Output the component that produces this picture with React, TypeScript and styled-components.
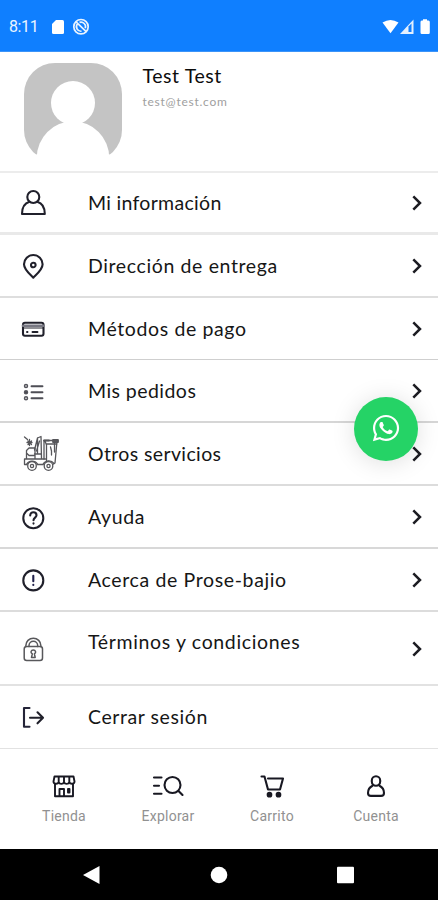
import React from "react";
import styled, { createGlobalStyle } from "styled-components";
import { FaWhatsapp } from "react-icons/fa";

const GlobalStyle = createGlobalStyle`
  *, *::before, *::after { box-sizing: border-box; }
  body { margin: 0; background: #fff; }
`;

const Screen = styled.div`
  position: relative;
  width: 438px;
  height: 900px;
  display: flex;
  flex-direction: column;
  overflow: hidden;
  background: #fff;
  color: #161616;
  font-family: Lato, sans-serif;
`;

const StatusBar = styled.header`
  flex: none;
  height: 52px;
  padding: 2px 7px 0 9px;
  display: flex;
  align-items: center;
  background: #0f7fff;
  border-bottom: 1px solid #3c94f8;
  color: #eaf4ff;
`;

const Clock = styled.span`
  width: 42px;
  padding-top: 1px;
  font: 400 16px/20px Roboto, sans-serif;
  letter-spacing: -0.4px;
`;

const StatusIcons = styled.svg<{ $end?: boolean }>`
  display: block;
  margin-left: ${(p) => (p.$end ? "auto" : "0")};
`;

const Profile = styled.section`
  flex: none;
  height: 121px;
  padding: 11px 24px 0;
  display: flex;
  gap: 20.5px;
  border-bottom: 2px solid #ececec;
`;

const ProfileText = styled.div`
  display: flex;
  flex-direction: column;
`;

const Name = styled.h1`
  margin: 1px 0 0;
  font-size: 19.5px;
  line-height: 24px;
  font-weight: 400;
  letter-spacing: 0.58px;
  color: #0c0c0c;
`;

const Email = styled.span`
  margin-top: 6px;
  font-size: 12px;
  line-height: 16px;
  letter-spacing: 0.75px;
  color: #a0a0a0;
`;

const Menu = styled.ul`
  flex: none;
  margin: 0;
  padding: 0;
  list-style: none;
`;

const MenuRow = styled.li<{ $height: number; $line: number; $tone: string }>`
  height: ${(p) => p.$height}px;
  padding: 0 15px;
  display: flex;
  align-items: center;
  border-bottom: ${(p) => p.$line}px solid ${(p) => p.$tone};
`;

const RowIcon = styled.svg`
  flex: none;
  display: block;
  width: 73px;
  height: 44px;
  fill: none;
  stroke: #20202b;
  stroke-width: 2.1;
  stroke-linecap: round;
  stroke-linejoin: round;
`;

const Label = styled.span<{ $spacing: number; $lift?: number }>`
  flex: 1;
  font-size: 19.5px;
  line-height: 24px;
  letter-spacing: ${(p) => p.$spacing}px;
  padding-bottom: ${(p) => p.$lift ?? 0}px;
  white-space: nowrap;
`;

const Chevron = styled.svg`
  flex: none;
  display: block;
  margin-top: 1px;
  fill: none;
  stroke: #1c1c22;
  stroke-width: 2.5;
`;

const TabBar = styled.nav`
  flex: none;
  height: 100px;
  padding: 22px 10px 0 12px;
  display: grid;
  grid-template-columns: repeat(4, 1fr);
`;

const Tab = styled.div`
  display: flex;
  flex-direction: column;
  align-items: center;
  gap: 6px;
`;

const TabIcon = styled.svg`
  display: block;
  fill: none;
  stroke: #181822;
  stroke-width: 2.1;
  stroke-linecap: round;
  stroke-linejoin: round;
`;

const TabLabel = styled.span`
  font: 400 14px/18px Roboto, sans-serif;
  letter-spacing: 0.25px;
  color: #919191;
`;

const SystemBar = styled.footer`
  flex: 1;
  display: flex;
  align-items: center;
  justify-content: center;
  background: #000;
`;

const ChatButton = styled.button`
  position: absolute;
  right: 20px;
  top: 397px;
  width: 64px;
  height: 64px;
  padding: 0 0 2px;
  border: 0;
  border-radius: 50%;
  display: flex;
  align-items: center;
  justify-content: center;
  background: #25d366;
  color: #fff;
  box-shadow: 0 2px 24px rgba(0, 0, 0, 0.13);
`;

const icons = {
  person: (
    <>
      <circle cx="18.3" cy="-6" r="6" />
      <path d="M14.500-1.300C10 0 7 4.200 7 11H29.800C29.800 4.200 27 0 22.200-1.300" />
    </>
  ),
  pin: (
    <>
      <path d="M18.300 11.700C14 7.500 9 3.500 9-1.700A9.300 9.300 0 0 1 27.600-1.700C27.600 3.500 22.500 7.500 18.300 11.700Z" />
      <circle cx="18.3" cy="-1" r="2.300" />
    </>
  ),
  card: (
    <>
      <rect x="8" y="-6.300" width="20.500" height="13" rx="2" />
      <path d="M8-3.200H28.500" stroke="#777782" strokeWidth="2.600" />
      <path d="M8-1H28.500" strokeWidth="1.200" />
      <path d="M12 3h.5M17.500 3h5" strokeWidth="1.900" />
    </>
  ),
  list: (
    <>
      <path d="M16.500 -4.800H27.500M16.500 1.200H27.500M16.500 7.200H27.500" stroke="#4e4e55" strokeWidth="1.900" />
      <g stroke="#55555c" strokeWidth="1.500">
        <circle cx="11" cy="-5" r="1.500" />
        <circle cx="11" cy="1.200" r="1.500" fill="#44444b" />
        <circle cx="11" cy="7.300" r="1.500" />
      </g>
    </>
  ),
  cart: (
    <g stroke="#56565a" strokeWidth="1.300">
      <path d="M9.500 5V10.500H12M22 10.500H28M9.500 5H30.500M11.500 4.500V-3.500L14-6H20V4.500M12-.5L14 1.500H19" />
      <path d="M9.500-17l3 2.500M14.500-14.500v6M12-11.500h5M13-13l3.500 3.500M16.500-13l-3.500 3.500" />
      <path d="M19.500-4L22.500-16L26-17.500L26.500 4.500M22.500-16V0M24.500-13L21.500-3M19.500 0H26" />
      <path d="M29 5V-13.500H42M31.500-10H42M30-13L31.500-9V9M42-13L40 9L36 11.500M35.500-7L36.500-3V1M39.500-11V-2" />
      <path d="M29-13.500H34M38-12H43V-14H38Z" strokeWidth="1.800" />
      <circle cx="17" cy="12" r="4.300" fill="#fff" />
      <circle cx="17" cy="12" r="1.600" />
      <circle cx="33.500" cy="12" r="4.300" fill="#fff" />
      <circle cx="33.500" cy="12" r="1.600" />
      <path d="M11.500 10.500A6.500 6.500 0 0 1 22.500 10M28 10.500A6.500 6.500 0 0 1 39 9.500" />
    </g>
  ),
  help: (
    <>
      <circle cx="18.300" cy="1.200" r="10" />
      <path d="M15.200-1.500C15.200-6 21.500-5.600 21.500-1.800C21.500.5 18.500.7 18.500 3.200M18.500 6.200v.4" />
    </>
  ),
  info: (
    <>
      <circle cx="18.300" cy=".4" r="10" />
      <path d="M18.300-4.300V1.200M18.300 4.700v.3" stroke="#20204a" />
    </>
  ),
  lock: (
    <g stroke="#58585b" strokeWidth="1.500">
      <rect x="9.200" y="-1.500" width="18.300" height="14" rx="2.500" />
      <path d="M10.800-1.500V-2.300A7.500 7.500 0 0 1 25.900-2.300V-1.500M14-1.500V-2.300A4.300 4.300 0 0 1 22.700-2.300V-1.500" />
      <path d="M16.500 9.500L17.300 5.800C15 4.300 16 2.100 18.300 2.100S21.600 4.300 19.400 5.800L20.200 9.500Z" />
    </g>
  ),
  logout: (
    <>
      <path d="M14.500-9H9V9.800H14.500" stroke="#242438" />
      <path d="M15 .8H27.800M22.500-4.700L28 .8L22.500 6.300" />
    </>
  ),
};

type Item = {
  icon: keyof typeof icons;
  label: string;
  height: number;
  line: number;
  tone: string;
  spacing: number;
  lift?: number;
  arrow?: boolean;
};

const items: Item[] = [
  { icon: "person", label: "Mi información", height: 62, line: 3, tone: "#e9e9e9", spacing: 0.3 },
  { icon: "pin", label: "Dirección de entrega", height: 63, line: 2, tone: "#dedede", spacing: 0.62 },
  { icon: "card", label: "Métodos de pago", height: 62, line: 1, tone: "#cfcfcf", spacing: 0.62 },
  { icon: "list", label: "Mis pedidos", height: 63, line: 2, tone: "#d6d6d6", spacing: 0.45 },
  { icon: "cart", label: "Otros servicios", height: 63, line: 2, tone: "#dcdcdc", spacing: 0.37 },
  { icon: "help", label: "Ayuda", height: 63, line: 2, tone: "#d8d8d8", spacing: 0.65 },
  { icon: "info", label: "Acerca de Prose-bajio", height: 63, line: 2, tone: "#dcdcdc", spacing: 0.63 },
  { icon: "lock", label: "Términos y condiciones", height: 74, line: 2, tone: "#e2e2e2", spacing: 0.65, lift: 12 },
  { icon: "logout", label: "Cerrar sesión", height: 63, line: 1, tone: "#e2e2e2", spacing: 0.58, arrow: false },
];

const tabs = [
  {
    label: "Tienda",
    icon: (
      <g strokeWidth="1.900">
        <path d="M6.500 5.500H25.500L26.500 10.500C26.500 13.500 22 13.500 21.300 11C20.500 13.500 16.800 13.500 16 11C15.200 13.500 11.500 13.500 10.700 11C10 13.500 5.500 13.500 5.500 10.500ZM10.700 11V6M16 11V6M21.300 11V6" />
        <path d="M7 13V25.300H25V13M11.500 25V18H16V25M20 18H21.500V21.500H20Z" />
      </g>
    ),
  },
  {
    label: "Explorar",
    icon: (
      <>
        <path d="M2 6.500H9.500M2 14.700H7M2 22.800H9.500" />
        <circle cx="20.500" cy="14" r="8" />
        <path d="M26.500 20L30.500 24" />
      </>
    ),
  },
  {
    label: "Carrito",
    icon: (
      <>
        <path d="M5.500 5.500H8.500L12 18.500H24L27 7.500H12" />
        <circle cx="13.500" cy="23.700" r="1.800" fill="#181822" />
        <circle cx="22.500" cy="23.700" r="1.800" fill="#181822" />
      </>
    ),
  },
  {
    label: "Cuenta",
    icon: (
      <>
        <rect x="11.800" y="5.200" width="8.400" height="9.500" rx="4.200" />
        <path d="M12.500 14.700C9.500 16.200 8 18.700 8 22Q8 24.900 11 24.900H21Q24 24.900 24 22C24 18.700 22.500 16.200 19.500 14.700" />
      </>
    ),
  },
];

const Avatar = () => (
  <svg width="98" height="98" viewBox="0 0 98 98">
    <defs>
      <clipPath id="portrait">
        <rect width="98" height="98" rx="31" />
      </clipPath>
    </defs>
    <g clipPath="url(#portrait)">
      <rect width="98" height="91.500" fill="#c4c4c4" />
      <circle cx="49" cy="40" r="22" fill="#fff" />
      <circle cx="49" cy="94.500" r="36.200" fill="#fff" />
    </g>
  </svg>
);

export default function App() {
  return (
    <>
      <GlobalStyle />
      <Screen>
        <StatusBar>
          <Clock>8:11</Clock>
          <StatusIcons width="40" height="18" viewBox="0 0 40 18">
            <path d="M5 2H11.500Q13 2 13 3.500V14.500Q13 16 11.500 16H2.500Q1 16 1 14.500V6Z" fill="#fff" />
            <g fill="none" stroke="#eaf4ff" strokeWidth="1.700">
              <circle cx="30" cy="8.700" r="7.200" />
              <path d="M26.500 5.700A4.600 4.600 0 0 0 30.500 13.200M28.500 4.400A4.600 4.600 0 0 1 34.300 10.200M24.800 3.700L35.200 13.700" />
            </g>
          </StatusIcons>
          <StatusIcons $end width="50" height="18" viewBox="0 0 50 18">
            <path d="M1.500 4.500Q9.500-.5 17.500 4.500L9.500 15.200Z" fill="#fff" />
            <path d="M19 16L32.500 1.500V16Z" fill="#e4f0ff" />
            <path d="M27.500 8.500L30.500 5.500V14H27.500Z" fill="#0f7fff" />
            <path d="M42 2.500V1.200H46V2.500H47.500Q48.800 2.500 48.800 4V14.500Q48.800 16 47.500 16H40.800Q39.500 16 39.500 14.500V4Q39.500 2.500 40.800 2.500Z" fill="#fff" />
          </StatusIcons>
        </StatusBar>

        <Profile>
          <Avatar />
          <ProfileText>
            <Name>Test Test</Name>
            <Email>test@test.com</Email>
          </ProfileText>
        </Profile>

        <Menu>
          {items.map((item) => (
            <MenuRow key={item.label} $height={item.height} $line={item.line} $tone={item.tone}>
              <RowIcon viewBox="0 -22 73 44">{icons[item.icon]}</RowIcon>
              <Label $spacing={item.spacing} $lift={item.lift}>
                {item.label}
              </Label>
              {item.arrow !== false && (
                <Chevron width="12" height="18" viewBox="0 0 12 18">
                  <path d="M2.300 2.300L9 9L2.300 15.700" />
                </Chevron>
              )}
            </MenuRow>
          ))}
        </Menu>

        <TabBar>
          {tabs.map((tab) => (
            <Tab key={tab.label}>
              <TabIcon width="32" height="30" viewBox="0 0 32 30">
                {tab.icon}
              </TabIcon>
              <TabLabel>{tab.label}</TabLabel>
            </Tab>
          ))}
        </TabBar>

        <SystemBar>
          <svg width="280" height="20" viewBox="0 0 280 20" fill="#fff">
            <path d="M4 10L20.500 1V19Z" />
            <circle cx="140" cy="10" r="8.300" />
            <rect x="258" y="1.700" width="17" height="16.600" rx="1" />
          </svg>
        </SystemBar>

        <ChatButton aria-label="WhatsApp">
          <FaWhatsapp size={30} />
        </ChatButton>
      </Screen>
    </>
  );
}
